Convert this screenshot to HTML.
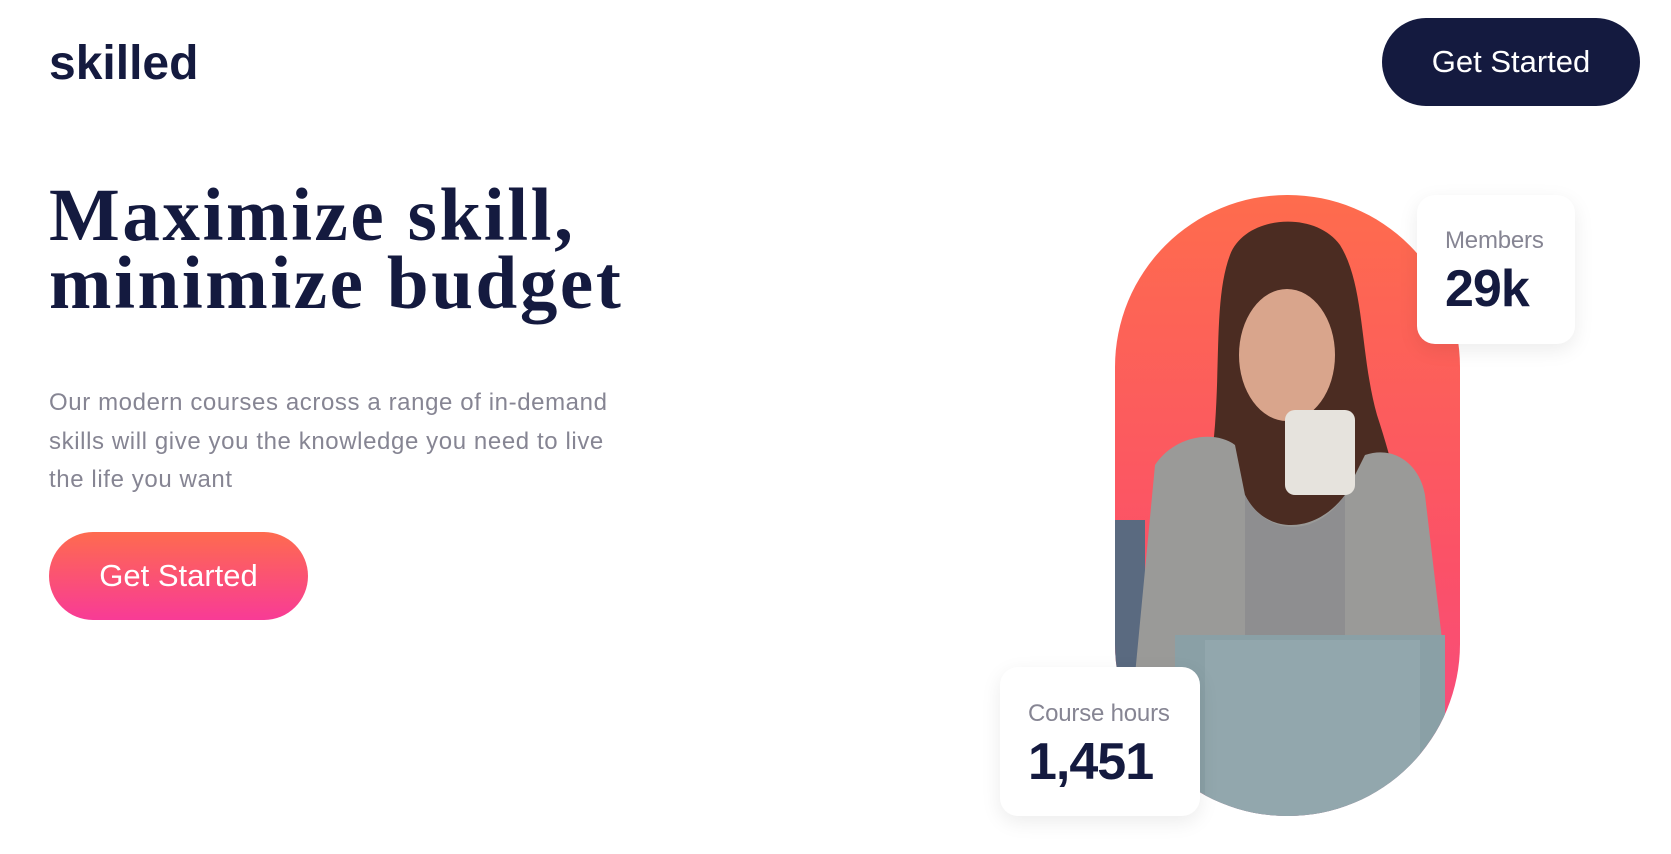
<!DOCTYPE html>
<html><head><meta charset="utf-8"><style>
*{margin:0;padding:0;box-sizing:border-box}
body{width:1671px;height:854px;background:#fff;font-family:"Liberation Sans",sans-serif;position:relative;overflow:hidden;color:#141a3f}
.logo{position:absolute;left:49px;top:36px;font-size:48px;font-weight:bold;color:#141a3f}
.nav{position:absolute;left:1382px;top:18px;width:258px;height:88px;border-radius:44px;background:#141a3f;color:#fff;font-size:31px;display:flex;align-items:center;justify-content:center}
h1{position:absolute;left:49px;top:182px;font-family:"Liberation Serif",serif;font-weight:bold;font-size:75px;line-height:68px;letter-spacing:2.6px;color:#141a3f}
p{position:absolute;left:49px;top:384px;width:600px;font-size:24px;line-height:38.5px;color:#868593;letter-spacing:0.6px}
.cta{position:absolute;left:49px;top:532px;width:259px;height:88px;border-radius:44px;background:linear-gradient(#fe6b4f,#f83b96);color:#fff;font-size:31px;display:flex;align-items:center;justify-content:center}
.pill{position:absolute;left:1115px;top:195px;width:345px;height:621px;border-radius:172px;overflow:hidden;background:linear-gradient(#fe6c4d,#fb5168 60%,#f64a86)}
.card{position:absolute;background:#fff;border-radius:18px;box-shadow:0 6px 20px rgba(0,0,0,.08);padding:0 28px}
.card .l{font-size:24px;color:#868593;letter-spacing:-0.2px}
.card .v{font-size:52px;font-weight:bold;color:#141a3f;letter-spacing:-1px;margin-top:4px}
</style></head><body>
<div class="logo">skilled</div>
<div class="nav">Get Started</div>
<h1>Maximize skill,<br>minimize budget</h1>
<p>Our modern courses across a range of in-demand<br>skills will give you the knowledge you need to live<br>the life you want</p>
<div class="cta">Get Started</div>
<div class="pill">
<svg width="345" height="621" viewBox="0 0 345 621">
<rect x="0" y="325" width="30" height="300" fill="#5a6a80"/>
<path d="M115 60 C130 20 200 15 225 50 C250 90 245 160 262 220 C285 290 300 360 290 430 L80 430 C70 360 95 300 100 230 C105 160 100 100 115 60Z" fill="#4b2c22"/>
<path d="M40 270 C60 240 100 235 120 250 L130 300 C150 340 200 340 230 300 L250 260 C280 250 305 270 310 300 L330 470 L20 480Z" fill="#9a9a98"/>
<ellipse cx="172" cy="160" rx="48" ry="66" fill="#d9a58c"/>
<path d="M130 300 C150 340 200 345 230 300 L230 470 L130 470Z" fill="#8e8e90"/>
<rect x="170" y="215" width="70" height="85" rx="10" fill="#e6e3dd"/>
<path d="M60 440 L330 440 L330 621 L60 621Z" fill="#8aa0a6"/>
<rect x="90" y="445" width="215" height="176" fill="#92a7ad"/>
</svg>
</div>
<div class="card" style="left:1417px;top:195px;width:158px;height:149px;padding-top:32px">
<div class="l">Members</div><div class="v">29k</div></div>
<div class="card" style="left:1000px;top:667px;width:200px;height:149px;padding-top:33px">
<div class="l">Course hours</div><div class="v">1,451</div></div>
</body></html>
